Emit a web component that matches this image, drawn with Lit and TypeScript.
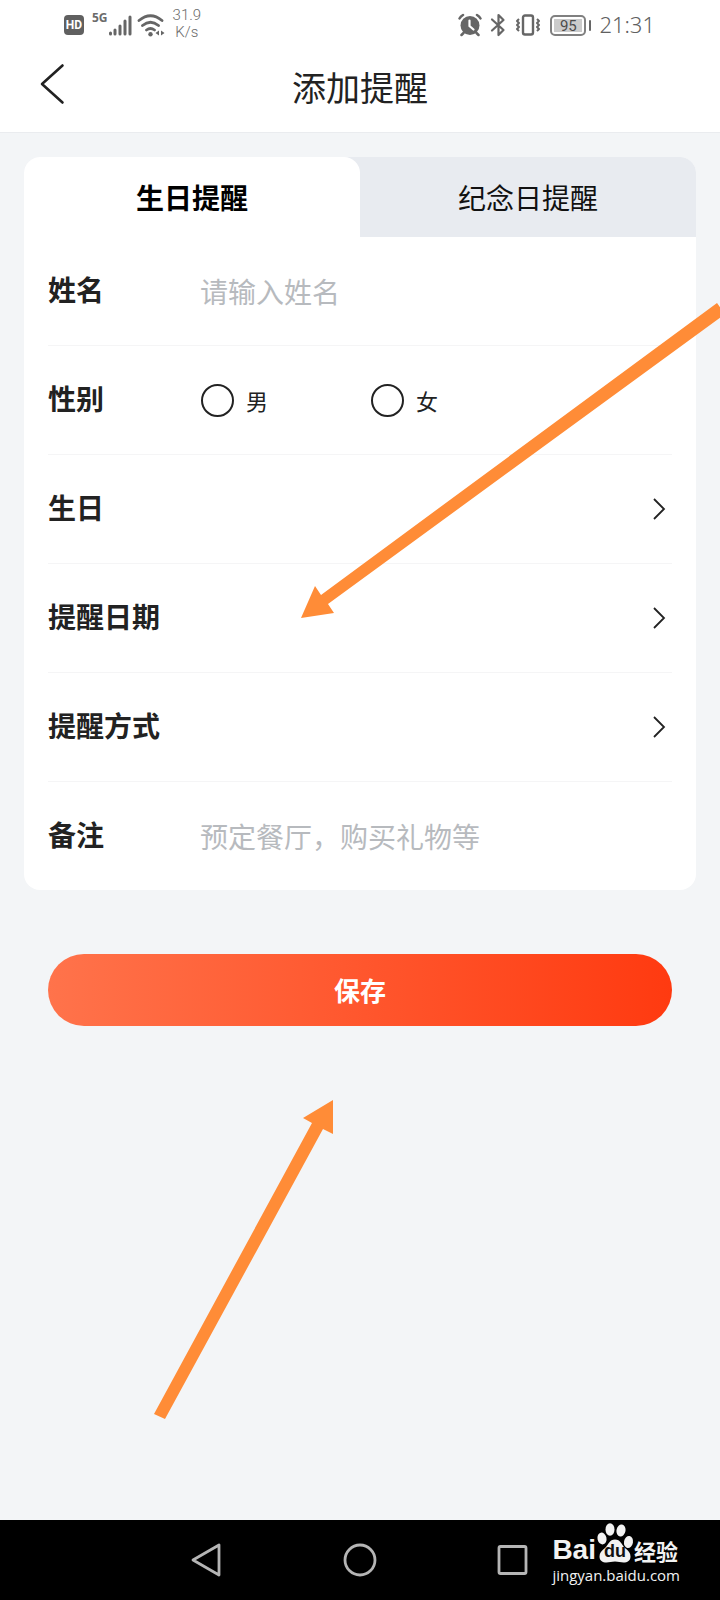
import { LitElement, html, css } from "lit";
import { customElement, state } from "lit/decorators.js";

@customElement("status-bar")
class StatusBar extends LitElement {
  static styles = css`
    :host { display: block; }
    .bar { display: flex; justify-content: space-between; height: 50px; padding: 0 65px 0 64px; color: #6b6b6b; font-family: "Roboto", sans-serif; box-sizing: border-box; }
    .group { display: flex; align-items: center; }
    .hd { width: 20px; height: 20px; border-radius: 4px; background: #606060; color: #fff; font-size: 12px; line-height: 20px; font-weight: 700; text-align: center; }
    .gen { font-size: 12px; line-height: 12px; font-weight: 700; align-self: flex-start; margin: 12px 0 0 8px; font-family: "Open Sans", sans-serif; }
    .wifi { margin-left: 5px; }
    .rate { font-size: 15px; line-height: 17px; font-weight: 300; text-align: center; margin: 0 0 2px 7px; }
    .right { gap: 8px; }
    .battery { display: flex; align-items: center; gap: 3px; }
    .cell { width: 36px; height: 21px; box-sizing: border-box; border: 2px solid #808080; border-radius: 5px; padding: 2px; }
    .level { background: #cbcbcb; height: 13px; font-size: 15px; line-height: 14px; text-align: center; color: #4c4c4c; }
    .cap { width: 2px; height: 11px; background: #666; border-radius: 1px; }
    .time { font-family: "Noto Sans", sans-serif; font-size: 22px; line-height: 24px; font-weight: 300; color: #606060; padding-bottom: 2px; }
    svg { display: block; flex: none; }
  `;
  render() {
    return html`<div class="bar">
      <div class="group">
        <span class="hd">HD</span>
        <span class="gen">5G</span>
        <svg width="24" height="24" viewBox="0 0 24 24" stroke="#666" stroke-width="3" stroke-linecap="round"><path d="M2.500 21v-1M7 21v-4M12 21v-8M17 21V8M22 21V4"/></svg>
        <svg class="wifi" width="29" height="26" viewBox="0 0 29 26" fill="none" stroke="#666" stroke-width="2.800" stroke-linecap="round">
          <path d="M2 8.500q11.500-9.500 23 0M5.500 13.500q8-6.500 16 0M9.500 18q4-3 8 0"/>
          <circle cx="13.500" cy="22.300" r="2.200" fill="#666" stroke="none"/>
          <path d="M22 18.500v5l-3.500-2.500zM24 18.500v5l3.500-2.500z" fill="#666" stroke="none"/>
        </svg>
        <div class="rate">31.9<br />K/s</div>
      </div>
      <div class="group right">
        <svg width="24" height="24" viewBox="0 0 24 24" fill="none" stroke="#666" stroke-linecap="round">
          <circle cx="12" cy="12.500" r="9.500" fill="#666" stroke="none"/>
          <path d="M1.500 5.500q1-2 3.500-3.500M22.500 5.500q-1-2-3.500-3.500M5.500 20l-2 2M18.500 20l2 2" stroke-width="2.500"/>
          <path d="M11.500 7.500v5.500l4 3.500" stroke="#fff" stroke-width="2.200"/>
        </svg>
        <svg width="16" height="24" viewBox="0 0 16 24" fill="none" stroke="#666" stroke-width="2.200" stroke-linejoin="round" stroke-linecap="round"><path d="M2 6.500l11.500 10.500L8.500 22V2l5 5L2 17.500"/></svg>
        <svg width="28" height="24" viewBox="0 0 28 24" fill="none" stroke="#666" stroke-width="2.400" stroke-linejoin="round">
          <rect x="9" y="2.500" width="10" height="19" rx="2"/>
          <path d="M5 6l-2 2 2 2-2 2 2 2-2 2 2 2M23 6l2 2-2 2 2 2-2 2 2 2-2 2" stroke-width="2"/>
        </svg>
        <div class="battery"><div class="cell"><div class="level">95</div></div><div class="cap"></div></div>
        <span class="time">21:31</span>
      </div>
    </div>`;
  }
}

@customElement("baidu-mark")
class BaiduMark extends LitElement {
  static styles = css`
    :host { display: block; color: #f2f2f2; }
    .top { display: flex; align-items: flex-end; height: 40px; margin-bottom: 3px; }
    .bai { font: 700 28px/26px "Liberation Sans", sans-serif; }
    .paw { position: relative; width: 38px; height: 40px; }
    .paw svg { display: block; }
    .du { position: absolute; left: 0; right: 0; bottom: 1px; text-align: center; color: #111; font: 700 18px/22px "Liberation Sans", sans-serif; }
    .exp { font: 700 22px/26px "Noto Sans CJK SC", sans-serif; }
    .url { font: 500 15px/18px "Open Sans", sans-serif; }
  `;
  render() {
    return html`<div class="top">
        <span class="bai">Bai</span>
        <span class="paw">
          <svg width="38" height="40" viewBox="0 0 38 40" fill="#f2f2f2">
            <ellipse cx="6" cy="15.500" rx="4.500" ry="6" transform="rotate(-12 6 15.500)"/>
            <ellipse cx="14" cy="6.500" rx="4.500" ry="6.200"/>
            <ellipse cx="25" cy="7.500" rx="4.500" ry="6" transform="rotate(10 25 7.500)"/>
            <ellipse cx="32.500" cy="19" rx="4.500" ry="6" transform="rotate(10 32.500 19)"/>
            <path d="M19 16.500c5.500 0 6.500 5 10 8.500 3.500 3 5.500 5 5.500 8.500 0 4-3 6-7 6-3 0-5-1-8.500-1s-5.500 1-8.500 1c-4 0-7-2-7-6 0-3.500 2-5.500 5.500-8.500 3.500-3.500 4.500-8.500 10-8.500z"/>
          </svg>
          <span class="du">du</span>
        </span>
        <span class="exp">经验</span>
      </div>
      <div class="url">jingyan.baidu.com</div>`;
  }
}

@customElement("app-root")
class AppRoot extends LitElement {
  @state() tab = 0;

  static styles = css`
    :host { display: block; font-family: "Noto Sans CJK SC", sans-serif; color: #222; }
    * { box-sizing: border-box; }
    button, input { font: inherit; color: inherit; margin: 0; padding: 0; border: 0; background: none; }
    .page { position: relative; min-height: 100vh; display: flex; flex-direction: column; background: #f3f5f7; overflow: hidden; }
    .top { background: #fff; border-bottom: 1px solid #eaecef; }
    .header { display: grid; grid-template-columns: 80px 1fr 80px; align-items: center; height: 82px; padding-bottom: 8px; }
    .back { align-self: start; height: 68px; padding-left: 38px; }
    .back svg { display: block; }
    .title { margin: 0; text-align: center; font-size: 34px; line-height: 44px; font-weight: 400; }
    .main { flex: 1; padding: 24px; }
    .card { background: #fff; border-radius: 16px; overflow: hidden; }
    .tabs { display: grid; grid-template-columns: 1fr 1fr; background: #e8ebf0; }
    .tab { height: 80px; font-size: 28px; line-height: 40px; color: #111; }
    .tab.on { background: #fff; border-radius: 0 16px 0 0; font-weight: 700; color: #000; }
    .rows { padding: 0 24px; }
    .row { display: grid; grid-template-columns: 152px 1fr auto; align-items: center; width: 100%; height: 109px; border-bottom: 1px solid #f5f5f6; font-size: 28px; line-height: 40px; text-align: left; }
    .row:last-child { border-bottom: 0; height: 108px; }
    .label { font-weight: 700; white-space: nowrap; padding-bottom: 4px; }
    .field { width: 100%; height: 60px; outline: 0; }
    .field::placeholder { color: #b7babe; opacity: 1; }
    .choices { display: flex; }
    .choice { display: flex; align-items: center; gap: 12px; width: 170px; padding-left: 1px; font-size: 22px; line-height: 32px; }
    .radio { appearance: none; width: 33px; height: 33px; border: 2px solid #222; border-radius: 50%; }
    .radio:checked { background: radial-gradient(circle, #ff4a1c 45%, transparent 50%); }
    .arrow { grid-column: 3; display: block; margin-right: 6px; }
    .save { display: block; width: calc(100% - 48px); height: 72px; margin: 64px 24px 0; border-radius: 36px; background: linear-gradient(90deg, #ff734b, #ff3a10); color: #fff; font-size: 26px; line-height: 40px; font-weight: 700; }
    .nav { position: relative; height: 80px; background: #000; padding: 0 18%; display: grid; grid-template-columns: repeat(3, 1fr); }
    .key { display: flex; align-items: center; justify-content: center; }
    .mark { position: absolute; right: 40px; bottom: 16px; }
    .pointers { position: absolute; top: 0; left: 0; width: 100%; pointer-events: none; }
  `;

  private link(label: string) {
    return html`<button class="row" type="button">
      <span class="label">${label}</span>
      <svg class="arrow" width="15" height="24" viewBox="0 0 15 24" fill="none" stroke="#222" stroke-width="1.800"><path d="M3 2l10 10L3 22"/></svg>
    </button>`;
  }

  render() {
    return html`<div class="page">
      <div class="top">
        <status-bar></status-bar>
        <header class="header">
          <button class="back" type="button" aria-label="返回">
            <svg width="28" height="44" viewBox="0 0 28 44" fill="none" stroke="#222" stroke-width="2.600" stroke-linecap="round" stroke-linejoin="round"><path d="M24.500 3.500L4 22l20.500 18.500"/></svg>
          </button>
          <h1 class="title">添加提醒</h1>
        </header>
      </div>
      <main class="main">
        <form class="card" @submit=${(e: Event) => e.preventDefault()}>
          <div class="tabs" role="tablist">
            ${["生日提醒", "纪念日提醒"].map((t, i) => html`<button type="button" role="tab" aria-selected=${this.tab === i} class="tab ${this.tab === i ? "on" : ""}" @click=${() => (this.tab = i)}>${t}</button>`)}
          </div>
          <div class="rows">
            <div class="row">
              <label class="label" for="name">姓名</label>
              <input class="field" id="name" type="text" placeholder="请输入姓名" />
            </div>
            <div class="row" role="radiogroup" aria-labelledby="sex">
              <span class="label" id="sex">性别</span>
              <div class="choices">
                <label class="choice"><input class="radio" type="radio" name="sex" value="m" />男</label>
                <label class="choice"><input class="radio" type="radio" name="sex" value="f" />女</label>
              </div>
            </div>
            ${["生日", "提醒日期", "提醒方式"].map((l) => this.link(l))}
            <div class="row">
              <label class="label" for="note">备注</label>
              <input class="field" id="note" type="text" placeholder="预定餐厅，购买礼物等" />
            </div>
          </div>
        </form>
        <button class="save" type="button">保存</button>
      </main>
      <nav class="nav">
        <button class="key" type="button" aria-label="后退"><svg width="36" height="36" viewBox="0 0 36 36" fill="none" stroke="#b5b5b5" stroke-width="2.800" stroke-linejoin="round"><path d="M31 3v30L5 18z"/></svg></button>
        <button class="key" type="button" aria-label="主页"><svg width="36" height="36" viewBox="0 0 36 36" fill="none" stroke="#b5b5b5" stroke-width="2.800"><circle cx="18" cy="18" r="15"/></svg></button>
        <button class="key" type="button" aria-label="最近任务"><svg width="36" height="36" viewBox="0 0 36 36" fill="none" stroke="#b5b5b5" stroke-width="2.800"><rect x="3" y="4.500" width="27" height="27" rx="1.500"/></svg></button>
        <baidu-mark class="mark"></baidu-mark>
      </nav>
      <svg class="pointers" viewBox="0 0 720 1600" fill="#ff8c37" aria-hidden="true">
        <path d="M301 618L315 586l6 9L717 303l8 11L328 604l6 9z"/>
        <path d="M333 1100v34l-10-5L165 1419l-11-5L312 1123l-9-5z"/>
      </svg>
    </div>`;
  }
}
